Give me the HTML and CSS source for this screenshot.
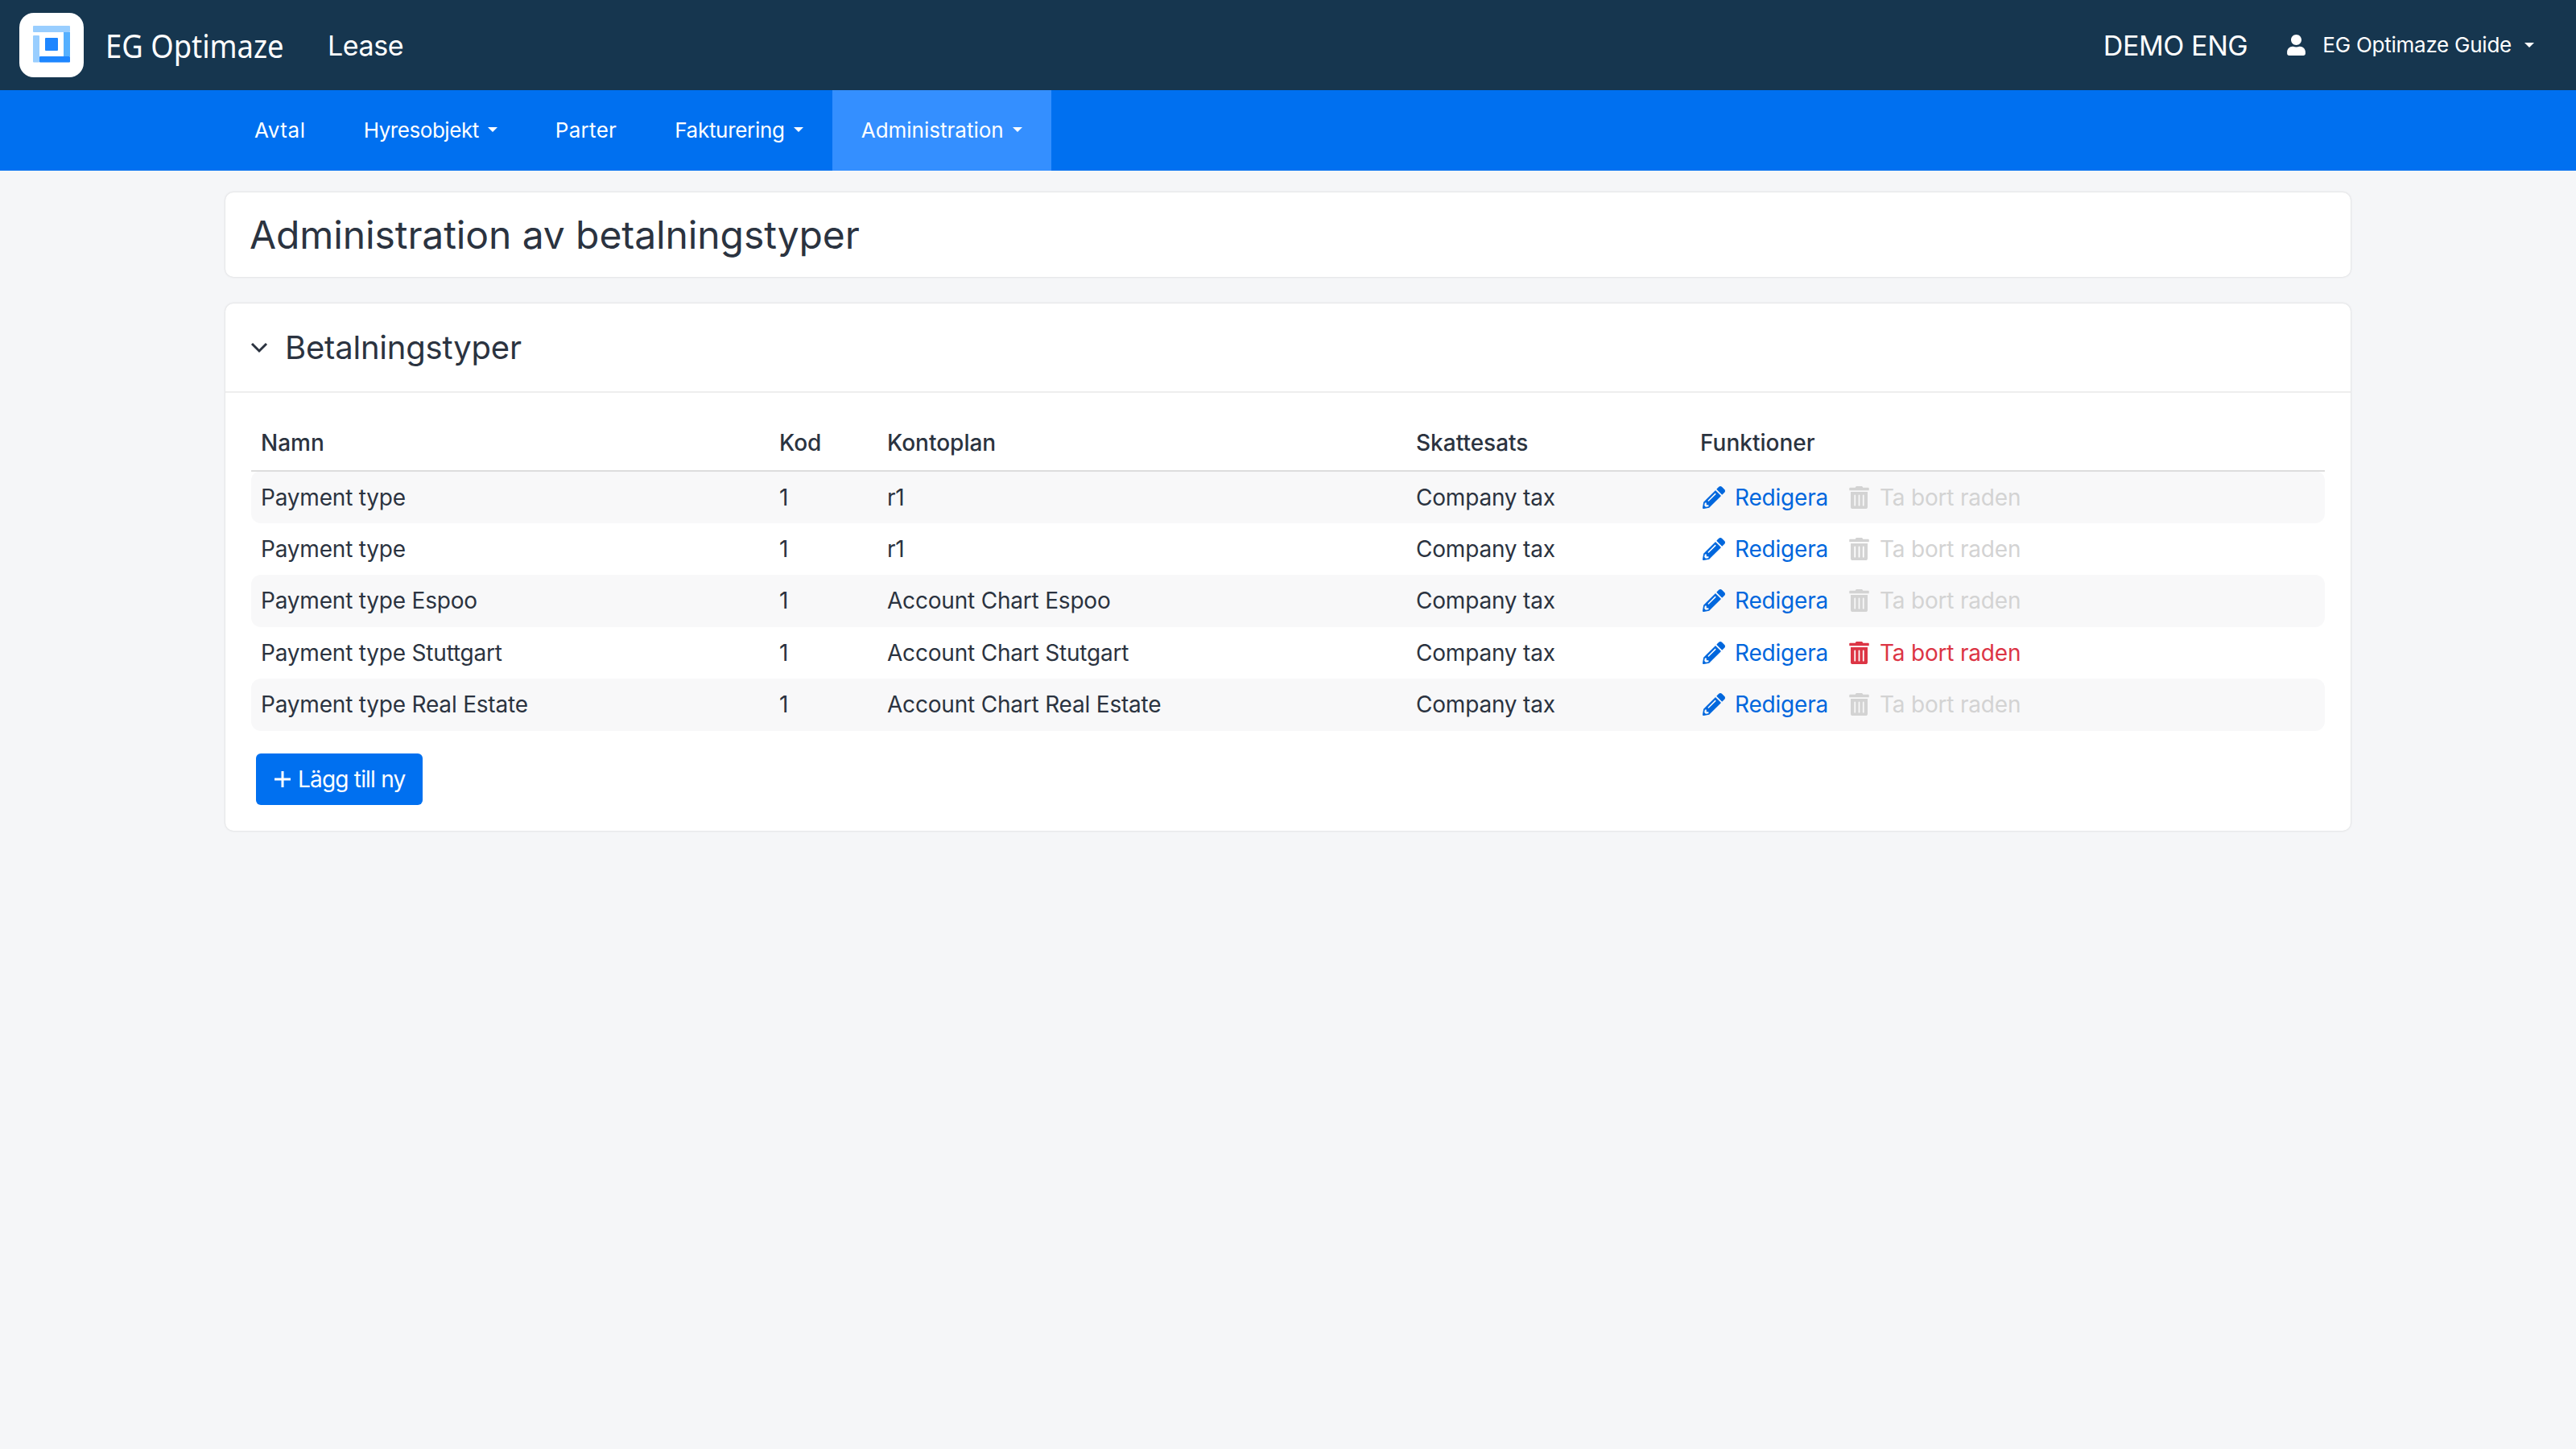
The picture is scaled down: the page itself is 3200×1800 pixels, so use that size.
FILE: index.html
```html
<!DOCTYPE html>
<html lang="sv">
<head>
    <meta charset="UTF-8">
    <title>Administration av betalningstyper</title>
    <link rel="stylesheet" href="styles.css">
</head>
<body>

    <!-- Top bar -->
    <header class="top-bar">
        <div class="logo">
            <svg class="logo-mark" viewBox="0 0 46 46">
                <rect x="0" y="0" width="46" height="8" rx="1" fill="#99ceff"/>
                <rect x="38" y="8" width="8" height="30" fill="#55b0ff"/>
                <rect x="8" y="38" width="38" height="7.5" rx="1" fill="#1e86ff"/>
                <rect x="0" y="12" width="8" height="33.5" rx="1" fill="#99ceff"/>
                <rect x="15" y="15" width="16" height="16" rx="1" fill="#1e86ff"/>
            </svg>
        </div>
        <span class="brand"><span class="brand-text">EG Optimaze</span></span>
        <span class="app-name">Lease</span>
        <div class="top-right">
            <span class="company">DEMO ENG</span>
            <svg class="user-icon" viewBox="0 0 448 512"><path d="M224 256c70.7 0 128-57.3 128-128S294.7 0 224 0 96 57.3 96 128s57.3 128 128 128zm89.6 32h-16.7c-22.2 10.2-46.9 16-72.9 16s-50.6-5.8-72.9-16h-16.7C60.2 288 0 348.2 0 422.4V464c0 26.5 21.5 48 48 48h352c26.5 0 48-21.5 48-48v-41.6c0-74.2-60.2-134.4-134.4-134.4z"/></svg>
            <span class="user-name">EG Optimaze Guide</span>
            <span class="caret"></span>
        </div>
    </header>

    <!-- Main menu -->
    <nav class="main-nav">
        <a class="nav-item"><span class="nav-avtal">Avtal</span></a>
        <a class="nav-item"><span class="nav-hyres">Hyresobjekt</span><span class="caret"></span></a>
        <a class="nav-item"><span class="nav-parter">Parter</span></a>
        <a class="nav-item"><span class="nav-fakt">Fakturering</span><span class="caret"></span></a>
        <a class="nav-item active">Administration<span class="caret"></span></a>
    </nav>

    <main class="content">
        <div class="card title-card">
            <h1>Administration av betalningstyper</h1>
        </div>

        <div class="card">
            <div class="card-header">
                <svg class="chevron" viewBox="0 0 22 14"><path d="M2 2l9 9 9-9" fill="none" stroke="#2b3340" stroke-width="3"/></svg>
                <h2>Betalningstyper</h2>
            </div>
            <div class="card-body">
                <table class="data-table">
                    <colgroup>
                        <col class="col-name"><col class="col-code"><col class="col-chart"><col class="col-tax"><col>
                    </colgroup>
                    <thead>
                        <tr><th>Namn</th><th>Kod</th><th>Kontoplan</th><th>Skattesats</th><th>Funktioner</th></tr>
                    </thead>
                    <tbody>
                        <tr>
                            <td>Payment type</td><td>1</td><td>r1</td><td>Company tax</td>
                            <td><div class="actions">
                                <a class="action edit"><svg class="pencil" viewBox="0 0 512 512"><path d="M497.9 142.1l-46.1 46.1c-4.7 4.7-12.3 4.7-17 0l-111-111c-4.7-4.7-4.7-12.3 0-17l46.1-46.1c18.7-18.7 49.1-18.7 67.9 0l60.1 60.1c18.8 18.7 18.8 49.1 0 67.9zM284.2 99.8L21.6 362.4.4 483.9c-2.9 16.4 11.4 30.6 27.8 27.8l121.5-21.3 262.6-262.6c4.7-4.7 4.7-12.3 0-17l-111-111c-4.8-4.7-12.4-4.7-17.1 0zM124.1 339.9c-5.5-5.5-5.5-14.3 0-19.8l154-154c5.5-5.5 14.3-5.5 19.8 0s5.5 14.3 0 19.8l-154 154c-5.5 5.5-14.3 5.5-19.8 0zM88 424h48v36.3l-64.5 11.3-31.1-31.1L51.7 376H88v48z"/></svg>Redigera</a>
                                <a class="action remove disabled"><svg class="trash" viewBox="0 0 448 512"><path d="M32 464a48 48 0 0 0 48 48h288a48 48 0 0 0 48-48V128H32zm272-256a16 16 0 0 1 32 0v224a16 16 0 0 1-32 0zm-96 0a16 16 0 0 1 32 0v224a16 16 0 0 1-32 0zm-96 0a16 16 0 0 1 32 0v224a16 16 0 0 1-32 0zM432 32H312l-9.4-18.7A24 24 0 0 0 281.1 0H166.8a23.72 23.72 0 0 0-21.4 13.3L136 32H16A16 16 0 0 0 0 48v32a16 16 0 0 0 16 16h416a16 16 0 0 0 16-16V48a16 16 0 0 0-16-16z"/></svg>Ta bort raden</a>
                            </div></td>
                        </tr>
                        <tr>
                            <td>Payment type</td><td>1</td><td>r1</td><td>Company tax</td>
                            <td><div class="actions">
                                <a class="action edit"><svg class="pencil" viewBox="0 0 512 512"><path d="M497.9 142.1l-46.1 46.1c-4.7 4.7-12.3 4.7-17 0l-111-111c-4.7-4.7-4.7-12.3 0-17l46.1-46.1c18.7-18.7 49.1-18.7 67.9 0l60.1 60.1c18.8 18.7 18.8 49.1 0 67.9zM284.2 99.8L21.6 362.4.4 483.9c-2.9 16.4 11.4 30.6 27.8 27.8l121.5-21.3 262.6-262.6c4.7-4.7 4.7-12.3 0-17l-111-111c-4.8-4.7-12.4-4.7-17.1 0zM124.1 339.9c-5.5-5.5-5.5-14.3 0-19.8l154-154c5.5-5.5 14.3-5.5 19.8 0s5.5 14.3 0 19.8l-154 154c-5.5 5.5-14.3 5.5-19.8 0zM88 424h48v36.3l-64.5 11.3-31.1-31.1L51.7 376H88v48z"/></svg>Redigera</a>
                                <a class="action remove disabled"><svg class="trash" viewBox="0 0 448 512"><path d="M32 464a48 48 0 0 0 48 48h288a48 48 0 0 0 48-48V128H32zm272-256a16 16 0 0 1 32 0v224a16 16 0 0 1-32 0zm-96 0a16 16 0 0 1 32 0v224a16 16 0 0 1-32 0zm-96 0a16 16 0 0 1 32 0v224a16 16 0 0 1-32 0zM432 32H312l-9.4-18.7A24 24 0 0 0 281.1 0H166.8a23.72 23.72 0 0 0-21.4 13.3L136 32H16A16 16 0 0 0 0 48v32a16 16 0 0 0 16 16h416a16 16 0 0 0 16-16V48a16 16 0 0 0-16-16z"/></svg>Ta bort raden</a>
                            </div></td>
                        </tr>
                        <tr>
                            <td>Payment type Espoo</td><td>1</td><td>Account Chart Espoo</td><td>Company tax</td>
                            <td><div class="actions">
                                <a class="action edit"><svg class="pencil" viewBox="0 0 512 512"><path d="M497.9 142.1l-46.1 46.1c-4.7 4.7-12.3 4.7-17 0l-111-111c-4.7-4.7-4.7-12.3 0-17l46.1-46.1c18.7-18.7 49.1-18.7 67.9 0l60.1 60.1c18.8 18.7 18.8 49.1 0 67.9zM284.2 99.8L21.6 362.4.4 483.9c-2.9 16.4 11.4 30.6 27.8 27.8l121.5-21.3 262.6-262.6c4.7-4.7 4.7-12.3 0-17l-111-111c-4.8-4.7-12.4-4.7-17.1 0zM124.1 339.9c-5.5-5.5-5.5-14.3 0-19.8l154-154c5.5-5.5 14.3-5.5 19.8 0s5.5 14.3 0 19.8l-154 154c-5.5 5.5-14.3 5.5-19.8 0zM88 424h48v36.3l-64.5 11.3-31.1-31.1L51.7 376H88v48z"/></svg>Redigera</a>
                                <a class="action remove disabled"><svg class="trash" viewBox="0 0 448 512"><path d="M32 464a48 48 0 0 0 48 48h288a48 48 0 0 0 48-48V128H32zm272-256a16 16 0 0 1 32 0v224a16 16 0 0 1-32 0zm-96 0a16 16 0 0 1 32 0v224a16 16 0 0 1-32 0zm-96 0a16 16 0 0 1 32 0v224a16 16 0 0 1-32 0zM432 32H312l-9.4-18.7A24 24 0 0 0 281.1 0H166.8a23.72 23.72 0 0 0-21.4 13.3L136 32H16A16 16 0 0 0 0 48v32a16 16 0 0 0 16 16h416a16 16 0 0 0 16-16V48a16 16 0 0 0-16-16z"/></svg>Ta bort raden</a>
                            </div></td>
                        </tr>
                        <tr>
                            <td>Payment type Stuttgart</td><td>1</td><td>Account Chart Stutgart</td><td>Company tax</td>
                            <td><div class="actions">
                                <a class="action edit"><svg class="pencil" viewBox="0 0 512 512"><path d="M497.9 142.1l-46.1 46.1c-4.7 4.7-12.3 4.7-17 0l-111-111c-4.7-4.7-4.7-12.3 0-17l46.1-46.1c18.7-18.7 49.1-18.7 67.9 0l60.1 60.1c18.8 18.7 18.8 49.1 0 67.9zM284.2 99.8L21.6 362.4.4 483.9c-2.9 16.4 11.4 30.6 27.8 27.8l121.5-21.3 262.6-262.6c4.7-4.7 4.7-12.3 0-17l-111-111c-4.8-4.7-12.4-4.7-17.1 0zM124.1 339.9c-5.5-5.5-5.5-14.3 0-19.8l154-154c5.5-5.5 14.3-5.5 19.8 0s5.5 14.3 0 19.8l-154 154c-5.5 5.5-14.3 5.5-19.8 0zM88 424h48v36.3l-64.5 11.3-31.1-31.1L51.7 376H88v48z"/></svg>Redigera</a>
                                <a class="action remove"><svg class="trash" viewBox="0 0 448 512"><path d="M32 464a48 48 0 0 0 48 48h288a48 48 0 0 0 48-48V128H32zm272-256a16 16 0 0 1 32 0v224a16 16 0 0 1-32 0zm-96 0a16 16 0 0 1 32 0v224a16 16 0 0 1-32 0zm-96 0a16 16 0 0 1 32 0v224a16 16 0 0 1-32 0zM432 32H312l-9.4-18.7A24 24 0 0 0 281.1 0H166.8a23.72 23.72 0 0 0-21.4 13.3L136 32H16A16 16 0 0 0 0 48v32a16 16 0 0 0 16 16h416a16 16 0 0 0 16-16V48a16 16 0 0 0-16-16z"/></svg>Ta bort raden</a>
                            </div></td>
                        </tr>
                        <tr>
                            <td>Payment type Real Estate</td><td>1</td><td>Account Chart Real Estate</td><td>Company tax</td>
                            <td><div class="actions">
                                <a class="action edit"><svg class="pencil" viewBox="0 0 512 512"><path d="M497.9 142.1l-46.1 46.1c-4.7 4.7-12.3 4.7-17 0l-111-111c-4.7-4.7-4.7-12.3 0-17l46.1-46.1c18.7-18.7 49.1-18.7 67.9 0l60.1 60.1c18.8 18.7 18.8 49.1 0 67.9zM284.2 99.8L21.6 362.4.4 483.9c-2.9 16.4 11.4 30.6 27.8 27.8l121.5-21.3 262.6-262.6c4.7-4.7 4.7-12.3 0-17l-111-111c-4.8-4.7-12.4-4.7-17.1 0zM124.1 339.9c-5.5-5.5-5.5-14.3 0-19.8l154-154c5.5-5.5 14.3-5.5 19.8 0s5.5 14.3 0 19.8l-154 154c-5.5 5.5-14.3 5.5-19.8 0zM88 424h48v36.3l-64.5 11.3-31.1-31.1L51.7 376H88v48z"/></svg>Redigera</a>
                                <a class="action remove disabled"><svg class="trash" viewBox="0 0 448 512"><path d="M32 464a48 48 0 0 0 48 48h288a48 48 0 0 0 48-48V128H32zm272-256a16 16 0 0 1 32 0v224a16 16 0 0 1-32 0zm-96 0a16 16 0 0 1 32 0v224a16 16 0 0 1-32 0zm-96 0a16 16 0 0 1 32 0v224a16 16 0 0 1-32 0zM432 32H312l-9.4-18.7A24 24 0 0 0 281.1 0H166.8a23.72 23.72 0 0 0-21.4 13.3L136 32H16A16 16 0 0 0 0 48v32a16 16 0 0 0 16 16h416a16 16 0 0 0 16-16V48a16 16 0 0 0-16-16z"/></svg>Ta bort raden</a>
                            </div></td>
                        </tr>
                    </tbody>
                </table>

                <button class="add-btn"><svg class="plus" viewBox="0 0 22 22"><path d="M11 1v20M1 11h20" fill="none" stroke="#fff" stroke-width="3"/></svg>Lägg till ny</button>
            </div>
        </div>
    </main>

</body>
</html>
```

FILE: styles.css
```css
* {
    box-sizing: border-box;
}

body {
    font-family: Inter, "Noto Sans", sans-serif;
    font-size: 28px;
    color: #2b3340;
    background-color: #f5f6f8;
    margin: 0;
    min-height: 100vh;
}

/* Top bar */
.top-bar {
    display: flex;
    align-items: center;
    height: 112px;
    background-color: #16364f;
    color: white;
    padding-left: 24px;
}

.logo {
    display: flex;
    justify-content: center;
    align-items: center;
    width: 80px;
    height: 80px;
    background-color: white;
    border-radius: 18px;
    padding-bottom: 2px;
}

.logo-mark {
    width: 46px;
    height: 46px;
}

.brand {
    font-family: "Noto Sans", sans-serif;
    font-size: 40px;
    margin-left: 27px;
    width: 276px;
}

.brand-text {
    display: inline-block;
    transform: scaleX(0.91);
    transform-origin: left center;
    white-space: nowrap;
}

.app-name {
    font-size: 34px;
    letter-spacing: -0.4px;
}

.top-right {
    display: flex;
    align-items: center;
    margin-left: auto;
    padding-right: 52px;
}

.company {
    font-size: 34px;
    letter-spacing: -0.4px;
    margin-right: 49px;
}

.user-icon {
    width: 23px;
    height: 26px;
    fill: white;
    margin-right: 21px;
}

.caret {
    display: inline-block;
    border-top: 6px solid white;
    border-left: 6px solid transparent;
    border-right: 6px solid transparent;
    margin-left: 11px;
    vertical-align: middle;
}

.user-name {
    font-size: 26px;
    letter-spacing: -0.25px;
    margin-right: 5px;
    padding-bottom: 2px;
}

/* Main menu */
.main-nav {
    display: flex;
    height: 100px;
    background-color: #0070f0;
    padding-left: 280px;
    font-size: 26px;
}

.nav-item {
    display: flex;
    align-items: center;
    padding: 0 36px 2px;
    color: white;
    white-space: nowrap;
}

.nav-item.active {
    background-color: #348fff;
}

.nav-avtal {
    letter-spacing: 0.6px;
}

.nav-hyres {
    letter-spacing: -0.45px;
}

.nav-parter {
    letter-spacing: 0.3px;
}

.nav-fakt {
    letter-spacing: -0.3px;
}

/* Content */
.content {
    padding: 27px 280px;
}

.card {
    background-color: white;
    border-radius: 10px;
    box-shadow: 0 0 3px rgba(0, 0, 0, 0.16);
    margin-bottom: 33px;
}

.title-card {
    height: 105px;
    display: flex;
    align-items: center;
    padding-left: 30px;
}

h1 {
    font-size: 48px;
    font-weight: 400;
    letter-spacing: -0.1px;
    margin: 0;
}

.card-header {
    display: flex;
    align-items: center;
    height: 111px;
    border-bottom: 2px solid #eeeeee;
    padding-left: 31px;
}

.chevron {
    width: 22px;
    height: 14px;
    margin-right: 21px;
}

h2 {
    font-size: 40px;
    font-weight: 400;
    letter-spacing: -0.2px;
    margin: 0;
}

.card-body {
    padding: 0 32px 32px;
}

/* Table */
.data-table {
    width: 100%;
    table-layout: fixed;
    border-collapse: collapse;
}

.col-name { width: 644px; }
.col-code { width: 134px; }
.col-chart { width: 657px; }
.col-tax { width: 353px; }

.data-table th {
    height: 97px;
    padding: 28px 12px 0;
    text-align: left;
    font-weight: 500;
    border-bottom: 2px solid #dddddd;
}

.data-table td {
    height: 64.5px;
    padding: 0 12px;
    letter-spacing: -0.2px;
}

.data-table tbody tr:nth-child(odd) td {
    background-color: #f8f8f9;
}

.data-table tbody tr:nth-child(odd) td:first-child {
    border-radius: 12px 0 0 12px;
}

.data-table tbody tr:nth-child(odd) td:last-child {
    border-radius: 0 12px 12px 0;
}

.actions {
    display: flex;
    align-items: center;
    gap: 26px;
    padding-left: 3px;
}

.action {
    display: flex;
    align-items: center;
    white-space: nowrap;
}

.action.edit {
    color: #0067dd;
    fill: #0067dd;
}

.action.remove {
    color: #dc3545;
    fill: #dc3545;
}

.action.remove.disabled {
    color: #d3d3d3;
    fill: #d3d3d3;
}

.pencil {
    width: 28px;
    height: 28px;
    margin-right: 12px;
}

.trash {
    width: 25px;
    height: 28px;
    margin-right: 13px;
}

.add-btn {
    display: flex;
    align-items: center;
    height: 64px;
    margin: 28px 0 0 6px;
    padding: 0 22px;
    background-color: #0070f0;
    color: white;
    border: none;
    border-radius: 6px;
    font-family: inherit;
    font-size: 28px;
    letter-spacing: -0.8px;
}

.plus {
    width: 22px;
    height: 22px;
    margin-right: 8px;
}
```
